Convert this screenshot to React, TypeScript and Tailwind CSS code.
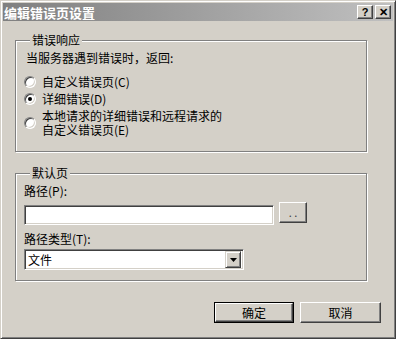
import React from 'react';

const font = { fontFamily: '"Noto Sans CJK SC", "Liberation Sans", sans-serif' };

const Radio: React.FC<{ checked?: boolean }> = ({ checked }) => (
  <span className="relative w-[12px] h-[12px] shrink-0 rounded-full bg-white border border-t-[#808080] border-l-[#808080] border-r-white border-b-white shadow-[inset_1px_1px_0_#404040,inset_-1px_-1px_0_#d4d0c8] flex items-center justify-center">
    {checked && <span className="w-[4px] h-[4px] rounded-full bg-black" />}
  </span>
);

const TitleButton: React.FC<{ children: React.ReactNode }> = ({ children }) => (
  <div className="w-[16px] h-[14px] bg-[#d4d0c8] border border-t-white border-l-white border-r-[#404040] border-b-[#404040] shadow-[inset_-1px_-1px_0_#808080] flex items-center justify-center text-[11px] font-bold leading-none text-black" style={{ fontFamily: '"Liberation Sans", sans-serif' }}>
    {children}
  </div>
);

const PushButton: React.FC<{ children: React.ReactNode; isDefault?: boolean }> = ({ children, isDefault }) => (
  <div className={`h-[21px] flex ${isDefault ? 'w-[80px] border border-black' : 'w-[81px]'}`}>
    <div className="flex-1 bg-[#d4d0c8] border border-t-white border-l-white border-r-[#404040] border-b-[#404040] shadow-[inset_-1px_-1px_0_#808080] flex items-center justify-center text-[12px] leading-none text-black">
      {children}
    </div>
  </div>
);

const App: React.FC = () => {
  return (
    <div className="w-[396px] h-[339px] bg-[#d4d0c8] border border-t-[#d4d0c8] border-l-[#d4d0c8] border-r-[#404040] border-b-[#404040] shadow-[inset_1px_1px_0_#fff,inset_-1px_-1px_0_#808080] p-[2px] flex flex-col text-black" style={font}>
      {/* title bar */}
      <div className="h-[18px] bg-gradient-to-r from-[#808080] to-[#c0c0c0] flex items-center justify-between pl-px pr-[2px]">
        <span className="text-[13px] font-bold text-white leading-none">编辑错误页设置</span>
        <div className="flex gap-[2px]">
          <TitleButton>?</TitleButton>
          <TitleButton>✕</TitleButton>
        </div>
      </div>

      {/* 错误响应 */}
      <fieldset className="ml-[12px] mt-[12px] w-[352px] h-[119px] border border-[#808080] shadow-[1px_1px_0_#fff,inset_1px_1px_0_#fff] pl-[8px]">
        <legend className="ml-[6px] px-[2px] bg-[#d4d0c8] text-[12px] leading-[14px]">错误响应</legend>
        <div className="mt-[4px] ml-[2px] text-[12px] leading-[14px]">当服务器遇到错误时，返回:</div>
        <div className="mt-[8px] h-[17px] flex items-center gap-[6px] text-[12px] leading-[14px]">
          <Radio />
          <span>自定义错误页(C)</span>
        </div>
        <div className="h-[17px] flex items-center gap-[6px] text-[12px] leading-[14px]">
          <Radio checked />
          <span>详细错误(D)</span>
        </div>
        <div className="mt-[2px] flex items-center gap-[6px] text-[12px] leading-[14px]">
          <Radio />
          <span>本地请求的详细错误和远程请求的<br />自定义错误页(E)</span>
        </div>
      </fieldset>

      {/* 默认页 */}
      <fieldset className="ml-[12px] mt-[14px] w-[352px] h-[115px] border border-[#808080] shadow-[1px_1px_0_#fff,inset_1px_1px_0_#fff] pl-[8px]">
        <legend className="ml-[6px] px-[2px] bg-[#d4d0c8] text-[12px] leading-[14px]">默认页</legend>
        <div className="mt-[4px] text-[12px] leading-[14px]">路径(P):</div>
        <div className="mt-[4px] flex items-start gap-[5px]">
          <div className="mt-[3px] w-[250px] h-[20px] bg-white border border-t-[#808080] border-l-[#808080] border-r-white border-b-white shadow-[inset_1px_1px_0_#404040,inset_-1px_-1px_0_#d4d0c8]" />
          <div className="w-[28px] h-[21px] bg-[#d4d0c8] border border-t-white border-l-white border-r-[#404040] border-b-[#404040] shadow-[inset_-1px_-1px_0_#808080] flex items-center justify-center text-[11px] leading-none text-[#404040]">
            . .
          </div>
        </div>
        <div className="mt-[7px] text-[12px] leading-[14px]">路径类型(T):</div>
        <div className="mt-[3px] w-[220px] h-[21px] bg-white border border-t-[#808080] border-l-[#808080] border-r-white border-b-white shadow-[inset_1px_1px_0_#404040,inset_-1px_-1px_0_#d4d0c8] p-[2px] flex items-center">
          <span className="flex-1 pl-px text-[12px] leading-none">文件</span>
          <div className="w-[16px] h-[17px] bg-[#d4d0c8] border border-t-[#d4d0c8] border-l-[#d4d0c8] border-r-[#404040] border-b-[#404040] shadow-[inset_1px_1px_0_#fff,inset_-1px_-1px_0_#808080] flex items-center justify-center">
            <svg width="7" height="4" viewBox="0 0 7 4">
              <path d="M0 0h7L3.5 4z" fill="#000" />
            </svg>
          </div>
        </div>
      </fieldset>

      {/* buttons */}
      <div className="mt-[21px] flex justify-end gap-[6px] pr-[12px]">
        <PushButton isDefault>确定</PushButton>
        <PushButton>取消</PushButton>
      </div>
    </div>
  );
};

export default App;
